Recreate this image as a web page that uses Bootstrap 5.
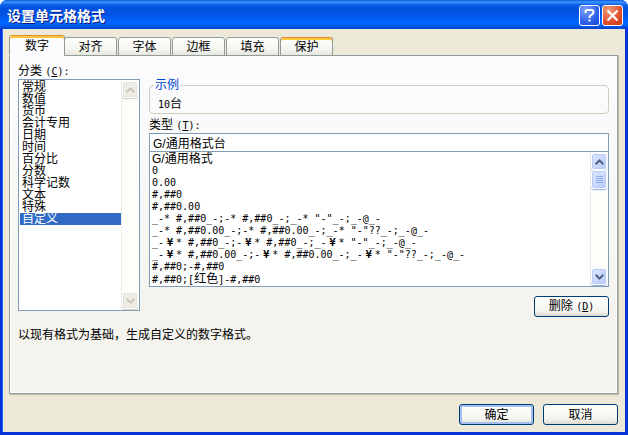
<!DOCTYPE html>
<html lang="zh-CN">
<head>
<meta charset="utf-8">
<meta name="viewport" content="width=device-width, initial-scale=1">
<title>设置单元格格式</title>
<link href="https://cdn.jsdelivr.net/npm/bootstrap@5.3.0/dist/css/bootstrap.min.css" rel="stylesheet">
<style>
body { font: 12px/12px "Liberation Sans", "Noto Sans CJK SC", sans-serif; color: #000; background: #fff; }
.mono { font-family: "DejaVu Sans Mono", monospace; font-size: 10px; white-space: pre; }
.mono b { display: inline-block; width: 12px; text-align: center; }
.dialog-window { background: #0831d9; border-radius: 7px 7px 0 0; overflow: hidden; }
.titlebar { height: 29px; padding: 2px 5px 0 7px; background: linear-gradient(#0a5ae0 0, #3c94ff 2px, #0a5fe8 5px, #0052de 9px, #0055e8 15px, #0066ff 22px, #0062fb 25px, #0040c8 29px); }
.titlebar h1 { font-family: "Noto Sans CJK SC", sans-serif; font-size: 14px; line-height: 18px; font-weight: 700; color: #fff; text-shadow: 1px 1px 0 #0a1883; padding-bottom: 2px; }
.cap-group { gap: 2px; }
.cap-btn { width: 21px; height: 21px; border: 1px solid #fff; border-radius: 3px; background: radial-gradient(circle at 30% 20%, #7da0f8, #2f62ea 60%, #1746d0); }
.cap-close { background: radial-gradient(circle at 30% 20%, #f09a7c, #e0512c 60%, #c23a12); }
.client { margin: 0 3px 3px; padding: 6px 7px 7px 6px; background: #ece9d8; box-shadow: -1px 0 #1c6cf5; }
.tabs { border: 0; gap: 1px; margin-bottom: -1px; align-items: flex-end; position: relative; }
.tabs .nav-link { width: 53px; height: 19px; padding: 1px 0 0; font-size: 12px; line-height: 14px; color: #000; text-align: center; background: linear-gradient(#fff, #f4f4ee 70%, #e6e6de); border: 1px solid #919b9c; border-radius: 3px 3px 0 0; margin: 0; }
.tabs .nav-link.active { width: 56px; height: 21px; margin-right: -2px; color: #000; background: #fcfcfe; border-color: #e68b2c #919b9c #fcfcfe; box-shadow: inset 0 2px #ffc73c; }
.tabs .nav-link.hot { border-top-color: #e68b2c; box-shadow: inset 0 2px #ffc73c; }
.panel { padding: 8px 8px 12px; border: 1px solid #919b9c; background: linear-gradient(#fcfcfe, #f4f3ee 80%); box-shadow: 1px 1px 1px #c4c1b2, inset 0 0 0 1px #fff; }
.field-label { line-height: 15px; }
.field-columns { gap: 9px; }
.category-col { width: 122px; }
.box { background: #fff; border: 1px solid #7f9db9; padding: 1px; }
.category-box { height: 232px; }
.type-box { height: 136px; margin-top: -1px; }
.box .list-group-item { height: 12px; padding: 0 0 0 1px; border: 0; color: #000; line-height: 12px; white-space: nowrap; background: transparent; }
.category-box .list-group-item { padding-left: 2px; }
.box .list-group-item.active { background: #316ac5; color: #fff; margin: 0; }
.sample { border: 1px solid #d0d0bf; border-radius: 4px; height: 35px; padding: 0 8px; margin: 15px 0 0; }
.sample legend { float: none; width: auto; margin: 0 0 0 -4px; padding: 0 1px; font-size: 12px; line-height: 12px; color: #0046d5; }
.sample output { padding-top: 7px; }
.type-input { height: 19px; padding: 0 3px; font: inherit; color: #000; border: 1px solid #7f9db9; border-radius: 0; outline-offset: -1px; }
.sbar { width: 17px; background: #fdfdfa; border-left: 1px solid #eeede5; }
.sbar button { width: 16px; height: 17px; padding: 0; border: 1px solid #fff; border-radius: 3px; box-shadow: inset 0 0 0 1px #b7cbf8, 0 1px 1px #8fabdf; background: linear-gradient(135deg, #dce6ff, #b9cbf8); }
.sbar .thumb { height: 19px; }
.sbar.off button { background: #eeede5; box-shadow: inset 0 0 0 1px #e4e3d9, 0 1px 1px #cfcdbd; }
.xp-btn { width: 75px; height: 21px; padding: 0; font-size: 12px; line-height: 18px; color: #000; border: 1px solid #003c74; border-radius: 3px; background: linear-gradient(#fff, #f3f3ee 75%, #dcd8ce); }
.xp-btn:hover { border-color: #003c74; color: #000; }
.xp-default { box-shadow: inset 0 0 0 2px #a5bff0; }
.delete-row { margin-top: 9px; }
.actions { gap: 9px; padding-top: 10px; }
</style>
<script src="https://cdn.jsdelivr.net/npm/bootstrap@5.3.0/dist/js/bootstrap.bundle.min.js"></script>
</head>
<body>
<main class="dialog-window d-flex flex-column min-vh-100">
  <header class="titlebar d-flex align-items-center">
    <h1 class="m-0 me-auto">设置单元格格式</h1>
    <div class="cap-group d-flex">
      <button class="cap-btn p-0 d-flex align-items-center justify-content-center" type="button" aria-label="帮助">
        <svg width="13" height="15" viewBox="0 0 13 15" fill="none" stroke="#fff" stroke-width="2"><path d="M2.500 5V4Q2.500 2 4.500 2H8Q10.500 2 10.500 4.200Q10.500 5.500 9 6.500L7.500 7.500Q6.500 8.300 6.500 10M6.500 11.500V13.500"/></svg>
      </button>
      <button class="cap-btn cap-close p-0 d-flex align-items-center justify-content-center" type="button" aria-label="关闭">
        <svg width="13" height="13" viewBox="0 0 13 13" stroke="#fff" stroke-width="2.200"><path d="M1.500 1.500L11.500 11.500M11.500 1.500L1.500 11.500"/></svg>
      </button>
    </div>
  </header>

  <div class="client d-flex flex-column flex-grow-1">
    <nav class="nav nav-tabs tabs" role="tablist">
      <button class="nav-link active" type="button" role="tab" aria-selected="true">数字</button>
      <button class="nav-link" type="button" role="tab">对齐</button>
      <button class="nav-link" type="button" role="tab">字体</button>
      <button class="nav-link" type="button" role="tab">边框</button>
      <button class="nav-link" type="button" role="tab">填充</button>
      <button class="nav-link hot" type="button" role="tab">保护</button>
    </nav>

    <section class="panel flex-grow-1">
      <div class="field-columns d-flex">
        <div class="category-col flex-shrink-0">
          <div class="field-label" id="category-label">分类 <span class="mono">(<u>C</u>):</span></div>
          <div class="box category-box d-flex">
            <div class="list-group list-group-flush flex-grow-1 rounded-0" role="listbox" aria-labelledby="category-label">
              <button type="button" role="option" class="list-group-item list-group-item-action">常规</button>
              <button type="button" role="option" class="list-group-item list-group-item-action">数值</button>
              <button type="button" role="option" class="list-group-item list-group-item-action">货币</button>
              <button type="button" role="option" class="list-group-item list-group-item-action">会计专用</button>
              <button type="button" role="option" class="list-group-item list-group-item-action">日期</button>
              <button type="button" role="option" class="list-group-item list-group-item-action">时间</button>
              <button type="button" role="option" class="list-group-item list-group-item-action">百分比</button>
              <button type="button" role="option" class="list-group-item list-group-item-action">分数</button>
              <button type="button" role="option" class="list-group-item list-group-item-action">科学记数</button>
              <button type="button" role="option" class="list-group-item list-group-item-action">文本</button>
              <button type="button" role="option" class="list-group-item list-group-item-action">特殊</button>
              <button type="button" role="option" aria-selected="true" class="list-group-item list-group-item-action active">自定义</button>
            </div>
            <div class="sbar off d-flex flex-column justify-content-between">
              <button type="button" class="d-flex align-items-center justify-content-center" aria-label="向上"><svg width="9" height="6" fill="none" stroke="#c9c7ba" stroke-width="2"><path d="M.7 5.200L4.500 1.400L8.300 5.200"/></svg></button>
              <button type="button" class="d-flex align-items-center justify-content-center" aria-label="向下"><svg width="9" height="6" fill="none" stroke="#c9c7ba" stroke-width="2"><path d="M.7 .8L4.500 4.600L8.300 .8"/></svg></button>
            </div>
          </div>
        </div>

        <div class="flex-grow-1 d-flex flex-column">
          <fieldset class="sample">
            <legend>示例</legend>
            <output class="d-block"><span class="mono">10</span>台</output>
          </fieldset>
          <label class="field-label mt-1" for="type">类型 <span class="mono">(<u>T</u>):</span></label>
          <input id="type" class="type-input w-100" type="text" value="G/通用格式台">
          <div class="box type-box d-flex">
            <div class="list-group list-group-flush flex-grow-1 rounded-0" role="listbox" aria-label="类型">
              <button type="button" role="option" class="list-group-item list-group-item-action">G/通用格式</button>
              <button type="button" role="option" class="list-group-item list-group-item-action mono">0</button>
              <button type="button" role="option" class="list-group-item list-group-item-action mono">0.00</button>
              <button type="button" role="option" class="list-group-item list-group-item-action mono">#,##0</button>
              <button type="button" role="option" class="list-group-item list-group-item-action mono">#,##0.00</button>
              <button type="button" role="option" class="list-group-item list-group-item-action mono">_-* #,##0_-;-* #,##0_-;_-* "-"_-;_-@_-</button>
              <button type="button" role="option" class="list-group-item list-group-item-action mono">_-* #,##0.00_-;-* #,##0.00_-;_-* "-"??_-;_-@_-</button>
              <button type="button" role="option" class="list-group-item list-group-item-action mono">_-<b>¥</b>* #,##0_-;-<b>¥</b>* #,##0_-;_-<b>¥</b>* "-"_-;_-@_-</button>
              <button type="button" role="option" class="list-group-item list-group-item-action mono">_-<b>¥</b>* #,##0.00_-;-<b>¥</b>* #,##0.00_-;_-<b>¥</b>* "-"??_-;_-@_-</button>
              <button type="button" role="option" class="list-group-item list-group-item-action mono">#,##0;-#,##0</button>
              <button type="button" role="option" class="list-group-item list-group-item-action"><span class="mono">#,##0;[</span>红色<span class="mono">]-#,##0</span></button>
            </div>
            <div class="sbar d-flex flex-column">
              <button type="button" class="d-flex align-items-center justify-content-center" aria-label="向上"><svg width="9" height="6" fill="none" stroke="#4d6185" stroke-width="2"><path d="M.7 5.200L4.500 1.400L8.300 5.200"/></svg></button>
              <button type="button" class="thumb d-flex align-items-center justify-content-center" aria-label="滚动"><svg width="7" height="8" stroke="#8cb0f8"><path d="M0 .5H7M0 2.500H7M0 4.500H7M0 6.500H7"/></svg></button>
              <button type="button" class="d-flex align-items-center justify-content-center mt-auto" aria-label="向下"><svg width="9" height="6" fill="none" stroke="#4d6185" stroke-width="2"><path d="M.7 .8L4.500 4.600L8.300 .8"/></svg></button>
            </div>
          </div>
          <div class="delete-row d-flex justify-content-end">
            <button class="btn xp-btn" type="button">删除 <span class="mono">(<u>D</u>)</span></button>
          </div>
        </div>
      </div>
      <p class="mt-2 pt-1 mb-0">以现有格式为基础，生成自定义的数字格式。</p>
    </section>

    <footer class="actions d-flex justify-content-end">
      <button class="btn xp-btn xp-default" type="button">确定</button>
      <button class="btn xp-btn" type="button">取消</button>
    </footer>
  </div>
</main>
</body>
</html>
